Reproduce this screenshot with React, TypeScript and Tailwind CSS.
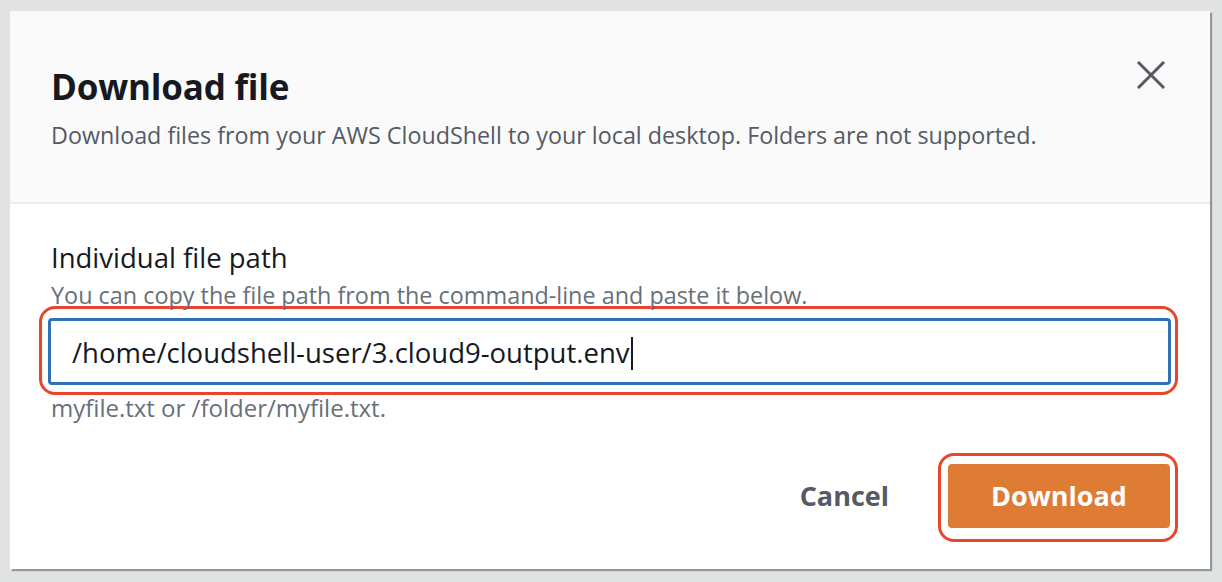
const font = { fontFamily: '"Open Sans", "Noto Sans", Arial, sans-serif' };

function CloseIcon() {
  return (
    <svg width="28" height="28" viewBox="0 0 28 28" fill="none" stroke="#545b64" strokeWidth="3" strokeLinecap="square">
      <path d="M2 2L26 26M26 2L2 26" />
    </svg>
  );
}

export default function App() {
  return (
    <div className="w-[1222px] h-[582px] bg-[#e1e3e3] pt-[11px] pl-[10px]" style={font}>
      <div className="w-[1200px] h-[558px] bg-white shadow-[2px_2px_1px_rgba(84,91,100,0.55)] flex flex-col">
        {/* header */}
        <div className="h-[193px] bg-[#fafafa] border-b-2 border-[#eaeded] pl-[41px] pr-[45px] flex justify-between">
          <div className="pt-[56px]">
            <h2 className="text-[35px] leading-[40px] font-bold text-[#16191f] tracking-[-0.2px]">Download file</h2>
            <p className="mt-[13px] text-[23.3px] leading-[30px] text-[#545b64]">
              Download files from your AWS CloudShell to your local desktop. Folders are not supported.
            </p>
          </div>
          <div className="pt-[50px]">
            <CloseIcon />
          </div>
        </div>

        {/* body */}
        <div className="pl-[29px] pr-[32px] pt-[37px]">
          <div className="pl-[12px]">
            <label className="block text-[27.5px] leading-[34px] text-[#16191f]">Individual file path</label>
            <p className="mt-[8px] text-[23.4px] leading-[24px] text-[#687078]">
              You can copy the file path from the command-line and paste it below.
            </p>
          </div>
          <div className="mt-[-1px] h-[89px] rounded-[16px] border-[3px] border-[#e9452d] pt-[9px] pb-[7px] pl-[6px] pr-[4px]">
            <div className="h-[67px] rounded-[4px] border-[3px] border-[#2e73b8] flex items-center pl-[21px] pt-[3px]">
              <span className="text-[27.5px] leading-[34px] text-[#16191f]">/home/cloudshell-user/3.cloud9-output.env</span>
              <span className="ml-[1px] w-[2px] h-[33px] bg-[#16191f]" />
            </div>
          </div>
          <p className="pl-[12px] mt-[-1px] text-[24px] leading-[28px] text-[#687078]">myfile.txt or /folder/myfile.txt.</p>
        </div>

        {/* footer */}
        <div className="mt-[31px] flex items-center justify-end pr-[32px] gap-[49px]">
          <button className="text-[27px] leading-[34px] font-bold text-[#545b64] mt-[-4px]">Cancel</button>
          <div className="rounded-[16px] border-[3px] border-[#e9452d] pt-[8px] pb-[11px] pl-[7px] pr-[5px]">
            <button className="w-[222px] h-[64px] rounded-[4px] bg-[#de7b35] text-white text-[27px] leading-[34px] font-bold">
              Download
            </button>
          </div>
        </div>
      </div>
    </div>
  );
}
